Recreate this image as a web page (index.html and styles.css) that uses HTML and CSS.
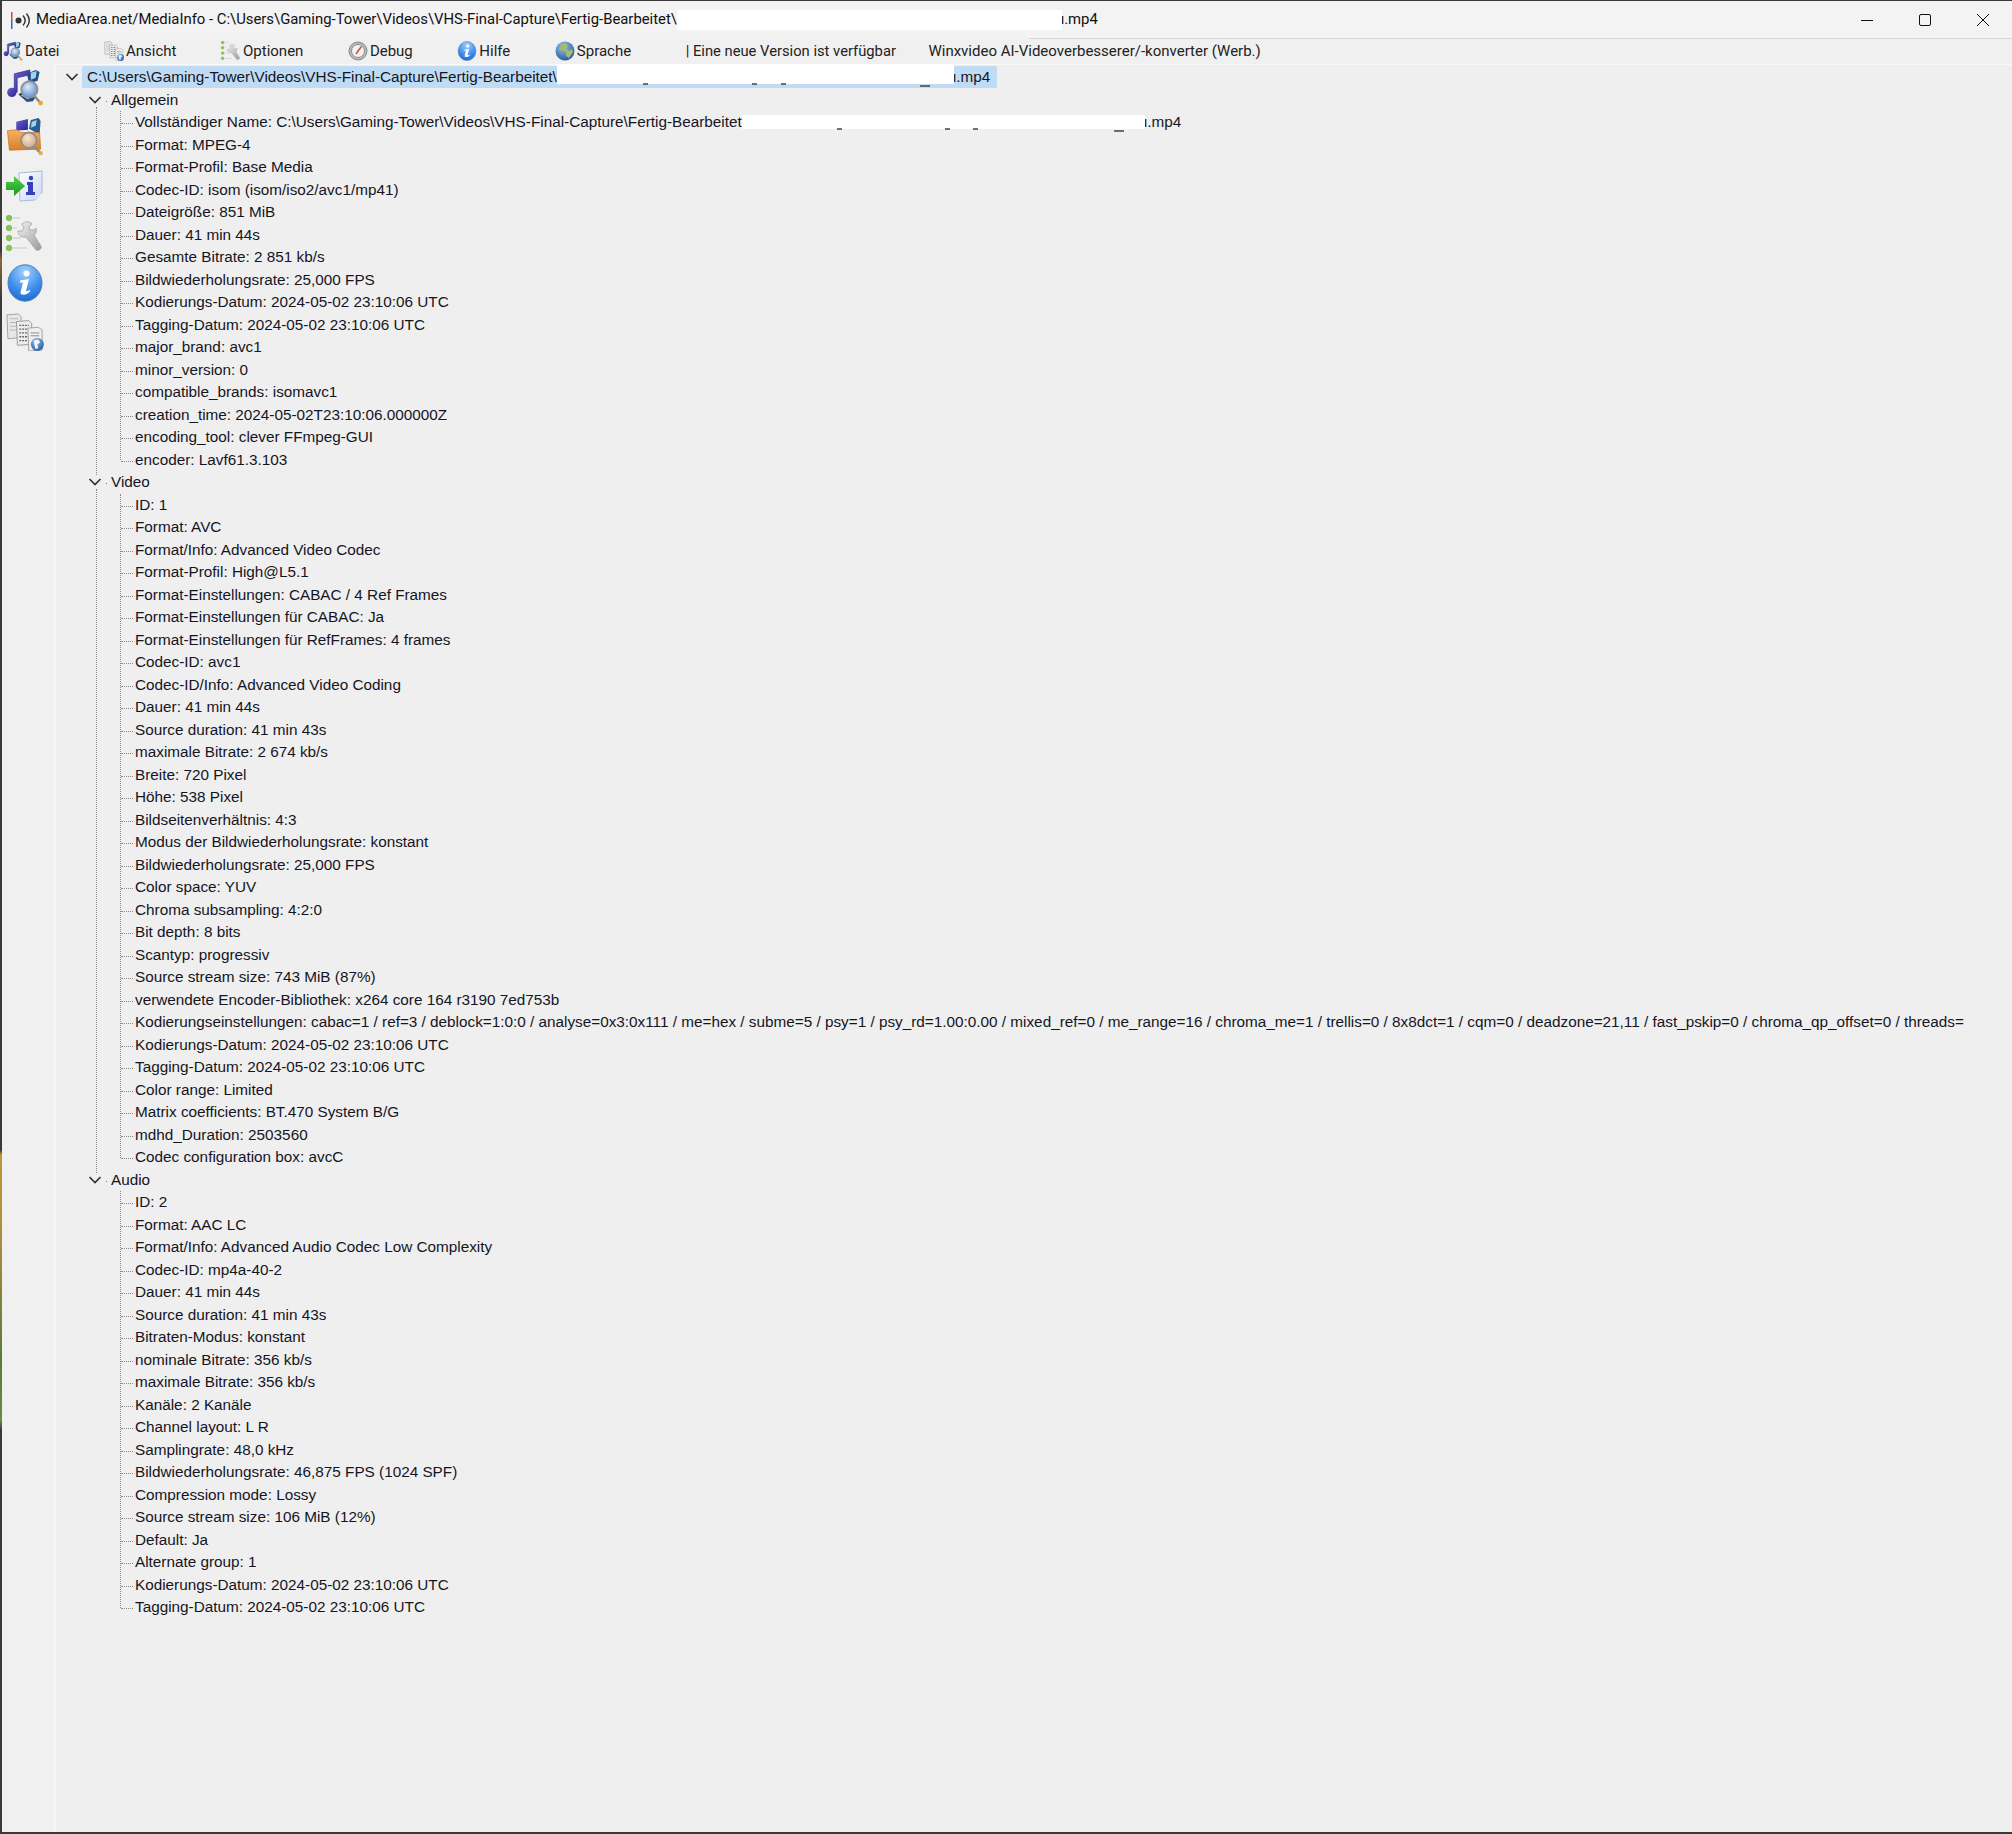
FILE: index.html
```html
<!DOCTYPE html>
<html lang="de">
<head>
<meta charset="utf-8">
<title>MediaInfo</title>
<link rel="stylesheet" href="styles.css">
</head>
<body>
<svg class="defs" aria-hidden="true">
  <defs>
    <linearGradient id="gPurple" x1="0" y1="0" x2="1" y2="1"><stop offset="0" stop-color="#6a62d8"/><stop offset="1" stop-color="#2b2088"/></linearGradient>
    <radialGradient id="gLens" cx=".4" cy=".35" r=".8"><stop offset="0" stop-color="#dfe9f7"/><stop offset="1" stop-color="#4d82c8"/></radialGradient>
    <radialGradient id="gLensO" cx=".4" cy=".35" r=".8"><stop offset="0" stop-color="#f7e7d6"/><stop offset="1" stop-color="#c89a72"/></radialGradient>
    <linearGradient id="gFolder" x1="0" y1="0" x2="0" y2="1"><stop offset="0" stop-color="#f6b265"/><stop offset="1" stop-color="#d97f26"/></linearGradient>
    <radialGradient id="gInfo" cx=".5" cy=".2" r=".9"><stop offset="0" stop-color="#a4d2fb"/><stop offset=".55" stop-color="#3f8fee"/><stop offset="1" stop-color="#155fc4"/></radialGradient>
    <linearGradient id="gArrow" x1="0" y1="0" x2="0" y2="1"><stop offset="0" stop-color="#57d24a"/><stop offset="1" stop-color="#149a1c"/></linearGradient>
    <linearGradient id="gPage" x1="0" y1="0" x2="1" y2="1"><stop offset="0" stop-color="#ffffff"/><stop offset="1" stop-color="#c9d6f2"/></linearGradient>
    <radialGradient id="gGlobe" cx=".4" cy=".3" r=".8"><stop offset="0" stop-color="#8fc2ef"/><stop offset="1" stop-color="#1d4f95"/></radialGradient>
    <linearGradient id="gWrench" x1="0" y1="0" x2="1" y2="1"><stop offset="0" stop-color="#f2f2f2"/><stop offset="1" stop-color="#9b9b9b"/></linearGradient>
    <symbol id="i-music" viewBox="0 0 38 39">
      <path d="M8 24V6L24 2v5L11 10v15z" fill="url(#gPurple)" stroke="#241a78" stroke-width=".6"/>
      <circle cx="5.500" cy="25" r="4.800" fill="url(#gPurple)"/>
      <path d="M21 6l9-4 4 2-2 9-9 3zM12 27l5-3 13 6-3 4-6 1z" fill="#27527f"/>
      <path d="M25 5l6-2-1 7-5 2zM15 28l5-2 5 3-3 3z" fill="#9fd4f2"/>
      <circle cx="23.500" cy="22" r="8.300" fill="url(#gLens)" stroke="#8d9198" stroke-width="2"/>
      <path d="M29 29l5 6" stroke="#8d8d80" stroke-width="2.500"/>
      <circle cx="35" cy="36" r="2.500" fill="#eea92e"/>
    </symbol>
    <symbol id="i-folder" viewBox="0 0 38 39">
      <path d="M10 14V5l12-3v11z" fill="url(#gPurple)"/>
      <path d="M23 12l2-9 8-2 2 3-1 14z" fill="#2f5c8f"/>
      <path d="M26 5l5-2-1 6-5 2z" fill="#a2d3ef"/>
      <path d="M1 14l10-1 3 3h20l1 17-32 1z" fill="url(#gFolder)" stroke="#b96c1f" stroke-width=".7"/>
      <circle cx="23" cy="24" r="8" fill="url(#gLensO)" stroke="#8f8f8f" stroke-width="2"/>
      <path d="M29 31l5 5" stroke="#8d8d80" stroke-width="2.500"/>
      <circle cx="35" cy="37" r="2.200" fill="#eea92e"/>
    </symbol>
    <symbol id="i-export" viewBox="0 -2 38 38">
      <path d="M13 5l23-2v22c-3 1-4 5-7 7l-15 1z" fill="url(#gPage)" stroke="#a8b6de" stroke-width="1"/>
      <path d="M36 25l-7 7 1-6z" fill="#dbe3f6"/>
      <circle cx="25" cy="10" r="2.200" fill="#3441b8"/>
      <path d="M21 14h6v10h2v3h-9v-3h2v-7h-1z" fill="#3441b8"/>
      <path d="M0 14h8V8l11 10-11 10v-6H0z" fill="url(#gArrow)"/>
    </symbol>
    <symbol id="i-prefs" viewBox="0 0 38 38">
      <g fill="#86c84c" stroke="#5f9f38" stroke-width=".5"><circle cx="3" cy="3" r="2.800"/><circle cx="3" cy="13" r="2.800"/><circle cx="3" cy="23" r="2.800"/><circle cx="3" cy="33" r="2.800"/></g>
      <g stroke="#d4d4d4" stroke-width="1.400"><path d="M7 3h7M7 13h4M7 23h8M7 33h14"/></g>
      <path d="M16 9c3-3 8-3 10 0l-3 3 1 3 4 0 2-2c1 3 0 6-2 7l7 11c1 3-2 5-5 4L20 22c-4 1-8-2-8-6l4 0 2-3z" fill="url(#gWrench)" stroke="#a2a2a2" stroke-width=".8"/>
    </symbol>
    <symbol id="i-info" viewBox="0 0 36 38">
      <ellipse cx="18" cy="19" rx="17" ry="18.200" fill="url(#gInfo)" stroke="#4d7eb8" stroke-width="1"/>
      <circle cx="19.500" cy="9.500" r="3" fill="#fff"/>
      <path d="M13 16.500l9-1.500-3 12c2 0 3-.5 4-1.500v2c-2 2.500-5 3.500-8 3-2-.5-1.500-2.500-1-4l2-8h-3z" fill="#fff"/>
    </symbol>
    <symbol id="i-docs" viewBox="0 0 40 40">
      <path d="M1 2l12-1 3 3v22l-14 1z" fill="#e8e8e8" stroke="#a0a0a0"/>
      <path d="M4 6h9M4 10h9M4 14h9M4 18h8" stroke="#b5b5b5"/>
      <path d="M11 9l13-1 3 3v22l-15 1z" fill="#ededed" stroke="#999"/>
      <path d="M14 13h10M14 17h10M14 21h10M14 25h10M14 29h9" stroke="#666" stroke-width="1.400" stroke-dasharray="2 1"/>
      <path d="M23 16l11-1 4 3v21l-14 1z" fill="#f0f0f0" stroke="#a0a0a0"/>
      <path d="M26 21h9M26 24h9" stroke="#888"/>
      <circle cx="33" cy="33" r="6.800" fill="url(#gGlobe)"/>
      <path d="M29 29l5-1 2 3-3 2 1 4-3 1-1-4z" fill="#eef4fa"/>
    </symbol>
    <symbol id="i-debug" viewBox="0 0 20 20">
      <circle cx="10" cy="10" r="9" fill="#b9b9b9" stroke="#858585"/>
      <circle cx="10" cy="10" r="6.500" fill="#f2f2f2" stroke="#8e8e8e"/>
      <path d="M13.500 5.500L10 10l-2 3" stroke="#cf4a3a" stroke-width="1.500" fill="none"/>
    </symbol>
    <symbol id="i-globe" viewBox="0 0 20 20">
      <circle cx="10" cy="10" r="9.500" fill="url(#gGlobe)"/>
      <path d="M6 3l5-1 2 3-2 3 3 2 3-2 1 3-4 6-3-2 0-4-4-2-3 1z" fill="#a7b96a"/>
    </symbol>
  </defs>
</svg>
<div class="window">
  <header class="titlebar">
    <svg class="app-icon" viewBox="0 0 20 17" width="20" height="17">
      <rect x="0" y="0" width="1.500" height="8" fill="#d6433a"/>
      <rect x="0" y="8" width="1.500" height="9" fill="#3a62c8"/>
      <circle cx="7.500" cy="8.500" r="3" fill="#333"/>
      <path d="M12 3.500c2.600 3 2.600 7 0 10M15.500 1.500c3.600 4.500 3.600 9.500 0 14" fill="none" stroke="#333" stroke-width="1.400"/>
    </svg>
    <span class="title-text">MediaArea.net/MediaInfo - C:\Users\Gaming-Tower\Videos\VHS-Final-Capture\Fertig-Bearbeitet\<span class="redact redact-title"></span>u.mp4</span>
    <div class="win-controls">
      <button class="win-btn" aria-label="Minimieren"><svg viewBox="0 0 12 12" width="12" height="12"><path d="M0 6.500h12" stroke="#111" stroke-width="1"/></svg></button>
      <button class="win-btn" aria-label="Maximieren"><svg viewBox="0 0 12 12" width="12" height="12"><rect x=".5" y=".5" width="11" height="11" rx="1.500" fill="none" stroke="#111"/></svg></button>
      <button class="win-btn" aria-label="Schließen"><svg viewBox="0 0 12 12" width="12" height="12"><path d="M0 0l12 12M12 0L0 12" stroke="#111" stroke-width="1"/></svg></button>
    </div>
  </header>
  <nav class="menubar">
    <span class="menu-item"><svg class="menu-icon"><use href="#i-music"/></svg>Datei</span>
    <span class="menu-item"><svg class="menu-icon"><use href="#i-docs"/></svg>Ansicht</span>
    <span class="menu-item"><svg class="menu-icon"><use href="#i-prefs"/></svg>Optionen</span>
    <span class="menu-item"><svg class="menu-icon"><use href="#i-debug"/></svg>Debug</span>
    <span class="menu-item"><svg class="menu-icon"><use href="#i-info"/></svg>Hilfe</span>
    <span class="menu-item"><svg class="menu-icon"><use href="#i-globe"/></svg>Sprache</span>
    <span class="menu-item update">| Eine neue Version ist verfügbar</span>
    <span class="menu-item ad">Winxvideo AI-Videoverbesserer/-konverter (Werb.)</span>
  </nav>
  <div class="main">
    <aside class="sidebar">
      <svg class="side-icon"><use href="#i-music"/></svg>
      <svg class="side-icon"><use href="#i-folder"/></svg>
      <svg class="side-icon"><use href="#i-export"/></svg>
      <svg class="side-icon"><use href="#i-prefs"/></svg>
      <svg class="side-icon"><use href="#i-info"/></svg>
      <svg class="side-icon"><use href="#i-docs"/></svg>
    </aside>
    <div class="tree">
      <div class="root-row">
        <svg class="chevron" viewBox="0 0 20 10" width="20" height="10"><path d="M4.500 2l5.500 5.500L15.500 2" /></svg>
        <span class="root-label">C:\Users\Gaming-Tower\Videos\VHS-Final-Capture\Fertig-Bearbeitet\<span class="redact redact-root"><svg class="desc" viewBox="0 0 397 4" width="397" height="4"><path d="M86 0h5M195 0h5M224 0h5M363 2h10"/></svg></span>u.mp4</span>
      </div>
      <ul class="groups">
        <li class="group">
          <div class="group-row"><svg class="chevron" viewBox="0 0 20 10" width="20" height="10"><path d="M4.500 2l5.500 5.500L15.500 2" /></svg><span class="group-label">Allgemein</span></div>
          <ul class="leaves">
            <li>Vollständiger Name: C:\Users\Gaming-Tower\Videos\VHS-Final-Capture\Fertig-Bearbeitet<span class="redact redact-full"><svg class="desc" viewBox="0 0 403 4" width="403" height="4"><path d="M95 0h5M203 0h5M231 0h5M372 2h10"/></svg></span>u.mp4</li>
            <li>Format: MPEG-4</li>
            <li>Format-Profil: Base Media</li>
            <li>Codec-ID: isom (isom/iso2/avc1/mp41)</li>
            <li>Dateigröße: 851 MiB</li>
            <li>Dauer: 41 min 44s</li>
            <li>Gesamte Bitrate: 2 851 kb/s</li>
            <li>Bildwiederholungsrate: 25,000 FPS</li>
            <li>Kodierungs-Datum: 2024-05-02 23:10:06 UTC</li>
            <li>Tagging-Datum: 2024-05-02 23:10:06 UTC</li>
            <li>major_brand: avc1</li>
            <li>minor_version: 0</li>
            <li>compatible_brands: isomavc1</li>
            <li>creation_time: 2024-05-02T23:10:06.000000Z</li>
            <li>encoding_tool: clever FFmpeg-GUI</li>
            <li>encoder: Lavf61.3.103</li>
          </ul>
        </li>
        <li class="group">
          <div class="group-row"><svg class="chevron" viewBox="0 0 20 10" width="20" height="10"><path d="M4.500 2l5.500 5.500L15.500 2" /></svg><span class="group-label">Video</span></div>
          <ul class="leaves">
            <li>ID: 1</li>
            <li>Format: AVC</li>
            <li>Format/Info: Advanced Video Codec</li>
            <li>Format-Profil: High@L5.1</li>
            <li>Format-Einstellungen: CABAC / 4 Ref Frames</li>
            <li>Format-Einstellungen für CABAC: Ja</li>
            <li>Format-Einstellungen für RefFrames: 4 frames</li>
            <li>Codec-ID: avc1</li>
            <li>Codec-ID/Info: Advanced Video Coding</li>
            <li>Dauer: 41 min 44s</li>
            <li>Source duration: 41 min 43s</li>
            <li>maximale Bitrate: 2 674 kb/s</li>
            <li>Breite: 720 Pixel</li>
            <li>Höhe: 538 Pixel</li>
            <li>Bildseitenverhältnis: 4:3</li>
            <li>Modus der Bildwiederholungsrate: konstant</li>
            <li>Bildwiederholungsrate: 25,000 FPS</li>
            <li>Color space: YUV</li>
            <li>Chroma subsampling: 4:2:0</li>
            <li>Bit depth: 8 bits</li>
            <li>Scantyp: progressiv</li>
            <li>Source stream size: 743 MiB (87%)</li>
            <li>verwendete Encoder-Bibliothek: x264 core 164 r3190 7ed753b</li>
            <li>Kodierungseinstellungen: cabac=1 / ref=3 / deblock=1:0:0 / analyse=0x3:0x111 / me=hex / subme=5 / psy=1 / psy_rd=1.00:0.00 / mixed_ref=0 / me_range=16 / chroma_me=1 / trellis=0 / 8x8dct=1 / cqm=0 / deadzone=21,11 / fast_pskip=0 / chroma_qp_offset=0 / threads=</li>
            <li>Kodierungs-Datum: 2024-05-02 23:10:06 UTC</li>
            <li>Tagging-Datum: 2024-05-02 23:10:06 UTC</li>
            <li>Color range: Limited</li>
            <li>Matrix coefficients: BT.470 System B/G</li>
            <li>mdhd_Duration: 2503560</li>
            <li>Codec configuration box: avcC</li>
          </ul>
        </li>
        <li class="group">
          <div class="group-row"><svg class="chevron" viewBox="0 0 20 10" width="20" height="10"><path d="M4.500 2l5.500 5.500L15.500 2" /></svg><span class="group-label">Audio</span></div>
          <ul class="leaves">
            <li>ID: 2</li>
            <li>Format: AAC LC</li>
            <li>Format/Info: Advanced Audio Codec Low Complexity</li>
            <li>Codec-ID: mp4a-40-2</li>
            <li>Dauer: 41 min 44s</li>
            <li>Source duration: 41 min 43s</li>
            <li>Bitraten-Modus: konstant</li>
            <li>nominale Bitrate: 356 kb/s</li>
            <li>maximale Bitrate: 356 kb/s</li>
            <li>Kanäle: 2 Kanäle</li>
            <li>Channel layout: L R</li>
            <li>Samplingrate: 48,0 kHz</li>
            <li>Bildwiederholungsrate: 46,875 FPS (1024 SPF)</li>
            <li>Compression mode: Lossy</li>
            <li>Source stream size: 106 MiB (12%)</li>
            <li>Default: Ja</li>
            <li>Alternate group: 1</li>
            <li>Kodierungs-Datum: 2024-05-02 23:10:06 UTC</li>
            <li>Tagging-Datum: 2024-05-02 23:10:06 UTC</li>
          </ul>
        </li>
      </ul>
    </div>
  </div>
</div>
</body>
</html>
```
FILE: styles.css
```css
* { box-sizing: border-box; }
html, body { height: 100%; }
body {
  margin: 0;
  background: linear-gradient(to bottom, #3a3a3a 0, #3a3a3a 250px, #8a6a3a 260px, #3a3a3a 300px, #3a3a3a 1150px, #b8983e 1155px, #a88e3e 1240px, #5a7a3a 1360px, #6a8a4a 1420px, #3a3a3a 1430px);
  font-family: "Liberation Sans", Arial, sans-serif;
  overflow: hidden;
}
.defs { display: block; width: 0; height: 0; }
.window {
  height: calc(100vh - 3px);
  margin: 1px 0 2px 2px;
  background: #f0f0f0;
  display: flex;
  flex-direction: column;
}
.titlebar {
  height: 38px;
  flex: none;
  display: flex;
  align-items: center;
  padding-left: 9px;
  background: #f3f3f3;
  font-family: Roboto, sans-serif;
  font-size: 14.86px;
  color: #111;
  position: relative;
}
.titlebar::after {
  content: "";
  position: absolute;
  left: 1027px;
  right: 0;
  bottom: 0;
  height: 1px;
  background: #d8d8d8;
}
.app-icon { flex: none; margin-right: 5px; }
.title-text { white-space: nowrap; }
.win-controls { margin-left: auto; display: flex; }
.win-btn {
  width: 58px;
  height: 38px;
  border: 0;
  padding: 0;
  background: none;
  display: flex;
  align-items: center;
  justify-content: center;
}
.redact {
  display: inline-block;
  position: relative;
  z-index: 1;
  background: #fff;
  vertical-align: top;
  margin-right: -6px;
}
.redact-title { width: 385px; height: 20px; }
.redact-root { width: 397px; height: 20px; margin-top: -2px; }
.redact-full { width: 403px; height: 14px; margin-top: 4px; }
.desc {
  position: absolute;
  left: 0;
  top: 100%;
  display: block;
  overflow: visible;
}
.desc path { stroke: #444; stroke-width: 1.6; fill: none; }
.menubar {
  height: 25px;
  flex: none;
  display: flex;
  align-items: center;
  gap: 44.5px;
  padding: 0 0 1px 1px;
  background: #f0f0f0;
  font-family: Roboto, sans-serif;
  font-size: 15px;
  color: #222;
  white-space: nowrap;
}
.menu-item { display: flex; align-items: center; gap: 2px; }
.menu-icon { width: 20px; height: 20px; flex: none; filter: blur(.3px); }
.update { margin-left: 10px; font-size: 14.75px; }
.ad { margin-left: -12px; }
.main { flex: 1; display: flex; min-height: 0; }
.sidebar {
  width: 52px;
  flex: none;
  display: flex;
  flex-direction: column;
  gap: 11px;
  padding: 4px 0 0 4px;
  background: #f0f0f0;
}
.side-icon { width: 38px; height: 38px; display: block; filter: blur(.4px); }
.tree {
  flex: 1;
  border-left: 2px solid #f6f6f6;
  border-top: 1px solid #f8f8f8;
  background: #efefef;
  padding: 1px 0 0 6px;
  font-size: 15.3px;
  line-height: 22.5px;
  color: #15151f;
  white-space: nowrap;
}
.root-row { display: flex; align-items: center; height: 22.5px; }
.chevron { flex: none; display: block; }
.chevron path { fill: none; stroke: #333; stroke-width: 1.7; }
.root-label {
  display: block;
  height: 22px;
  width: 915px;
  padding-left: 5px;
  background: #bfdcf4;
  border-radius: 2px;
}
.groups, .leaves { list-style: none; margin: 0; padding: 0; }
.groups { margin-left: 23px; }
.group { position: relative; }
.group:not(:last-child)::before {
  content: "";
  position: absolute;
  left: 11px;
  top: 18px;
  bottom: -4px;
  border-left: 1px dotted #8a8a8a;
}
.group-row { display: flex; align-items: center; height: 22.5px; position: relative; }
.group-label { padding-left: 6px; position: relative; }
.group-label::before {
  content: "";
  position: absolute;
  left: 1px;
  top: 12px;
  width: 1px;
  height: 1px;
  background: #777;
}
.leaves { position: relative; margin-left: 36px; }
.leaves::before {
  content: "";
  position: absolute;
  left: -1px;
  top: 0;
  bottom: 11px;
  border-left: 1px dotted #8a8a8a;
}
.leaves li { height: 22.5px; padding-left: 14px; position: relative; }
.leaves li::before {
  content: "";
  position: absolute;
  left: 0;
  top: 12px;
  width: 12px;
  border-top: 1px dotted #8a8a8a;
}
```
